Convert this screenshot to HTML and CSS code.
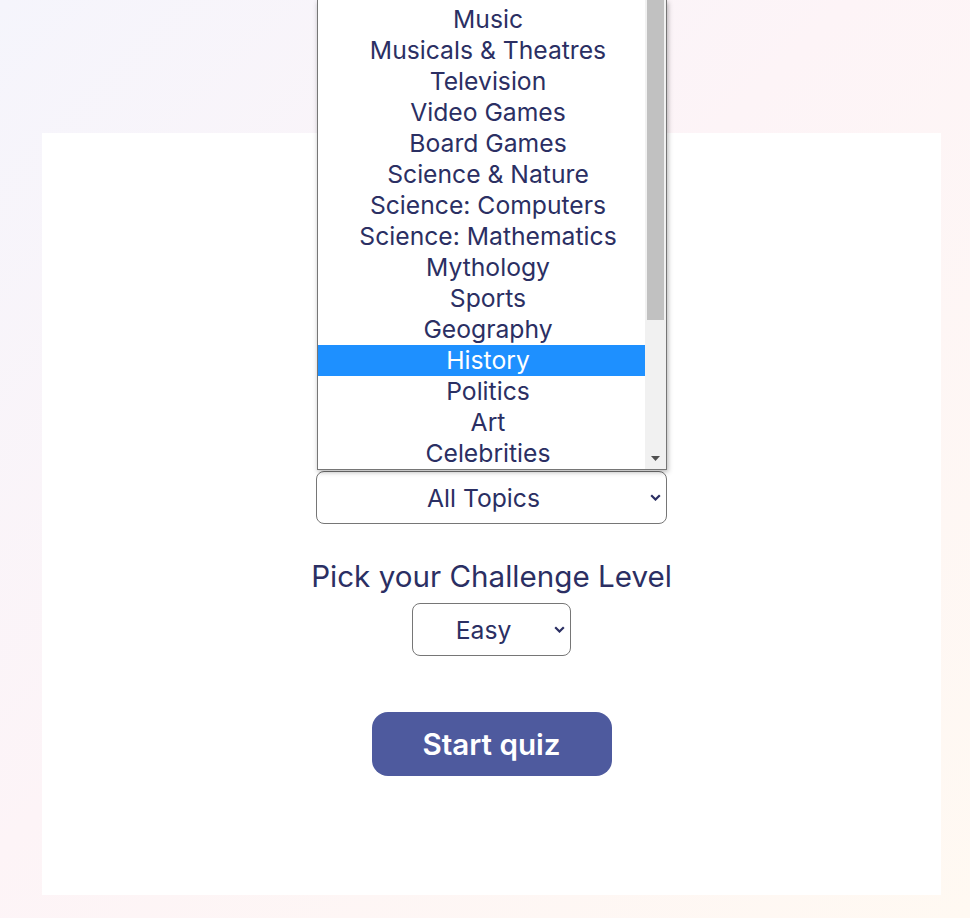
FILE: index.html
```html
<!DOCTYPE html>
<html lang="en">
<head>
<meta charset="utf-8">
<title>Quiz</title>
<link rel="stylesheet" href="styles.css">
</head>
<body>
<main class="card">
  <h2 class="label">Pick your Topic</h2>
  <div class="select-wrap topic">
    <select class="select">
      <option>All Topics</option>
    </select>
    <svg class="chev" width="11" height="7" viewBox="0 0 11 7"><path d="M1.2 1.2l4.3 4.3 4.3-4.3" fill="none" stroke="#2b2f63" stroke-width="2.2"/></svg>
    <div class="listbox">
      <div class="options">
        <div class="opt">Film</div>
        <div class="opt">Music</div>
        <div class="opt">Musicals &amp; Theatres</div>
        <div class="opt">Television</div>
        <div class="opt">Video Games</div>
        <div class="opt">Board Games</div>
        <div class="opt">Science &amp; Nature</div>
        <div class="opt">Science: Computers</div>
        <div class="opt">Science: Mathematics</div>
        <div class="opt">Mythology</div>
        <div class="opt">Sports</div>
        <div class="opt">Geography</div>
        <div class="opt selected">History</div>
        <div class="opt">Politics</div>
        <div class="opt">Art</div>
        <div class="opt">Celebrities</div>
      </div>
      <div class="scrollbar">
        <div class="thumb"></div>
        <svg class="arrow" width="9" height="5" viewBox="0 0 9 5"><path d="M0 0h9L4.5 5z" fill="#505050"/></svg>
      </div>
    </div>
  </div>
  <h2 class="label level">Pick your Challenge Level</h2>
  <div class="select-wrap easy">
    <select class="select">
      <option>Easy</option>
    </select>
    <svg class="chev" width="11" height="7" viewBox="0 0 11 7"><path d="M1.2 1.2l4.3 4.3 4.3-4.3" fill="none" stroke="#2b2f63" stroke-width="2.2"/></svg>
  </div>
  <button class="start">Start quiz</button>
</main>
</body>
</html>
```
FILE: styles.css
```css
html, body {
  margin: 0;
  padding: 0;
}
body {
  width: 970px;
  height: 918px;
  overflow: hidden;
  font-family: Inter, "Noto Sans", sans-serif;
  color: #2b2f63;
  background: linear-gradient(135deg, #f5f5fc 0%, #fdf4f7 45%, #fff9f2 100%);
}
.card {
  box-sizing: border-box;
  margin: 133px 0 0 42px;
  width: 899px;
  height: 762px;
  background: #fff;
  display: flex;
  flex-direction: column;
  align-items: center;
  padding-top: 294px;
}
.label {
  margin: 0;
  font-size: 29.6px;
  font-weight: 400;
  line-height: 34px;
  height: 34px;
  margin-bottom: 10px;
  white-space: nowrap;
}
.level {
  margin-top: 35px;
}
.select-wrap {
  position: relative;
}
.select {
  appearance: none;
  -webkit-appearance: none;
  box-sizing: border-box;
  background: #fff;
  border: 1px solid #767676;
  border-radius: 8px;
  font-family: Inter, "Noto Sans", sans-serif;
  font-size: 24.7px;
  color: #2b2f63;
  text-align: center;
  text-align-last: center;
  padding: 0 16px 0 0;
  display: block;
}
.topic .select {
  width: 351px;
  height: 53px;
}
.easy .select {
  width: 159px;
  height: 53px;
}
.chev {
  position: absolute;
  right: 6px;
  top: 23px;
  pointer-events: none;
}
.listbox {
  position: absolute;
  left: 1px;
  bottom: 54px;
  width: 350px;
  height: 470px;
  box-sizing: border-box;
  border: 1px solid #767676;
  border-top: none;
  background: #fff;
  box-shadow: 1px 2px 5px rgba(0, 0, 0, 0.3);
  display: flex;
  overflow: hidden;
}
.options {
  flex: 1;
  margin-top: -27px;
}
.opt {
  height: 31px;
  line-height: 31px;
  font-size: 24.7px;
  text-align: center;
  padding-left: 13px;
  white-space: nowrap;
}
.opt.selected {
  background: #1e90ff;
  color: #fff;
}
.scrollbar {
  width: 21px;
  background: #f1f1f1;
  position: relative;
  flex: none;
}
.thumb {
  position: absolute;
  left: 2px;
  right: 2px;
  top: 0;
  height: 320px;
  background: #c1c1c1;
}
.arrow {
  position: absolute;
  left: 6px;
  bottom: 8px;
}
.start {
  margin-top: 56px;
  width: 240px;
  height: 64px;
  border: none;
  border-radius: 16px;
  background: #4e5a9e;
  color: #fff;
  font-family: Inter, "Noto Sans", sans-serif;
  font-size: 29.6px;
  font-weight: 600;
  padding: 0;
}
```
